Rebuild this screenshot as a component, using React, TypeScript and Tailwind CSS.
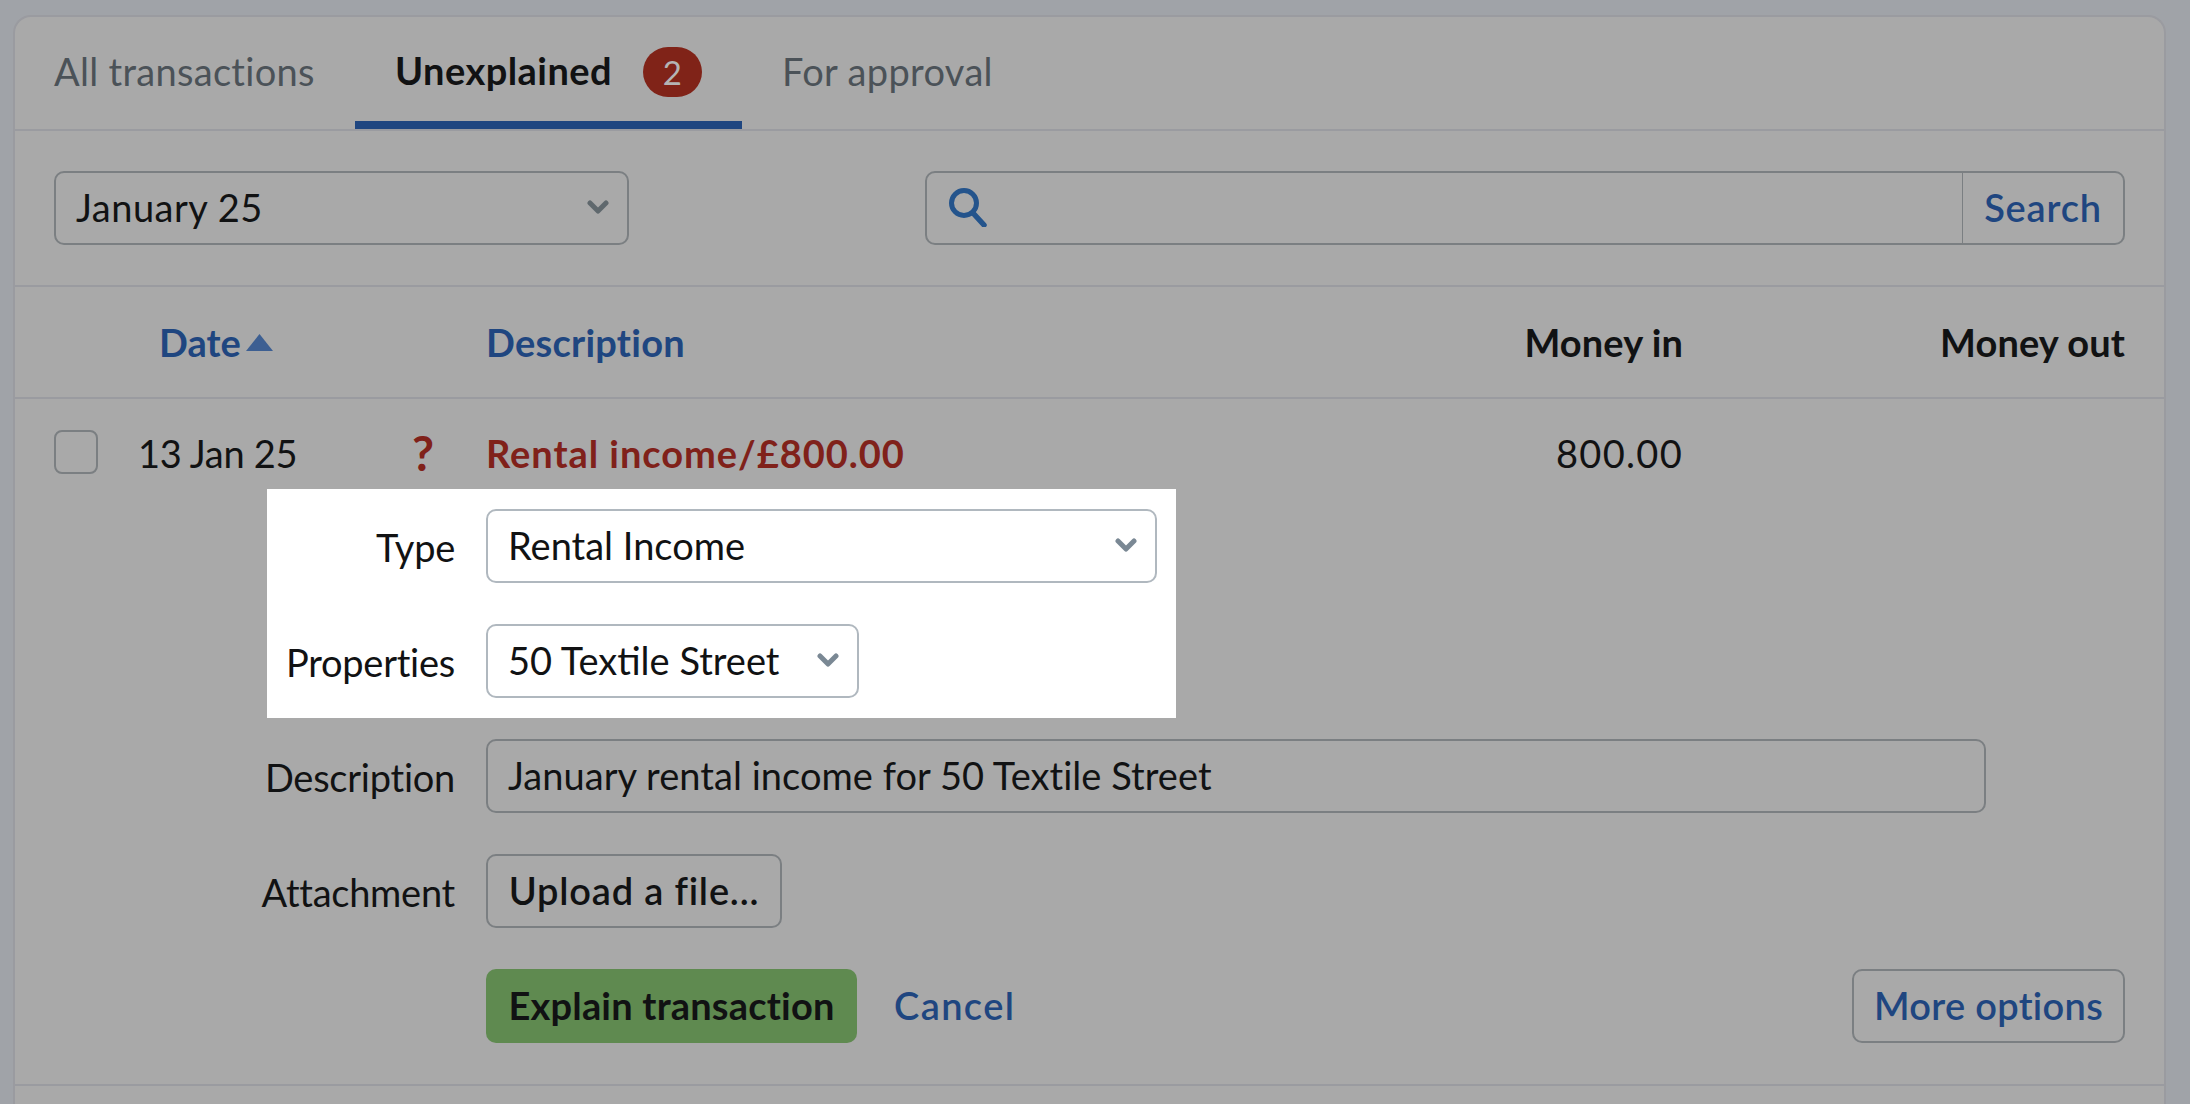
import React from "react";

const Chevron = ({ color = "#5f686d" }: { color?: string }) => (
  <svg width="22" height="14" viewBox="0 0 22 14" fill="none" className="shrink-0">
    <path d="M3 3l8 8 8-8" stroke={color} strokeWidth="5" strokeLinecap="round" strokeLinejoin="round" />
  </svg>
);

const Row = ({ label, children }: { label: string; children: React.ReactNode }) => (
  <div className="flex items-center gap-[31px]">
    <div className="w-[188px] flex justify-end whitespace-nowrap pt-[1px] tracking-[-0.25px] text-[#111213]">{label}</div>
    {children}
  </div>
);

export default function App() {
  return (
    <div className="w-[2190px] h-[1104px] overflow-hidden bg-[#a0a3a8] pl-[13px] pt-[15px] text-[38px] leading-[50px] text-[#111213] font-['Lato',sans-serif]">
      <div className="w-[2153px] h-[1100px] rounded-t-[18px] border-x-2 border-t-2 border-[#9a9ba0] bg-[#a9a9a9]">
        <div className="flex h-[114px] border-b-2 border-[#9a9ba0]">
          <div className="flex h-[112px] w-[340px] items-center pl-[39px] pb-[5px] tracking-[0.3px] text-[#4b5258]">All transactions</div>
          <div className="flex h-[112px] w-[387px] items-center gap-[31px] border-b-[8px] border-[#1f4680] pl-[40px] pt-[2px] font-bold tracking-[0.45px]">
            <span>Unexplained</span>
            <span className="mt-[3px] flex h-[50px] w-[59px] items-center justify-center rounded-full bg-[#802318] text-[33px] font-normal text-[#b4b4b4]">2</span>
          </div>
          <div className="flex h-[112px] items-center pl-[40px] pb-[5px] tracking-[0.35px] text-[#4b5258]">For approval</div>
        </div>

        <div className="flex h-[156px] items-center justify-between border-b-2 border-[#9a9ba0] pl-[39px] pr-[39px]">
          <div className="flex h-[74px] w-[575px] items-center justify-between rounded-[10px] border-2 border-[#7b7f82] pb-[2px] pl-[20px] pr-[18px]">
            <span className="tracking-[0.5px]">January 25</span>
            <Chevron />
          </div>
          <div className="flex h-[74px] w-[1200px] items-center rounded-[10px] border-2 border-[#7b7f82]">
            <div className="flex-1 pl-[21px] pb-[3px]">
              <svg width="40" height="40" viewBox="0 0 40 40" fill="none" className="block">
                <circle cx="16" cy="16" r="12.5" stroke="#24548c" strokeWidth="5" />
                <path d="M25 26l11 12" stroke="#24548c" strokeWidth="5.5" strokeLinecap="round" />
              </svg>
            </div>
            <div className="flex h-full w-[161px] items-center justify-center border-l border-[#7b7f82] pb-[2px] font-semibold tracking-[0.8px] text-[#1f4680]">Search</div>
          </div>
        </div>

        <div className="flex h-[112px] items-center border-b-2 border-[#9a9ba0] pr-[39px] font-bold">
          <div className="flex w-[471px] items-center gap-[5px] pl-[144px] text-[#1f4680]">
            <span>Date</span>
            <svg width="27" height="17" viewBox="0 0 27 17"><path d="M13.5 0L27 17H0z" fill="#3d5f92" /></svg>
          </div>
          <div className="flex-1 text-[#1f4680] tracking-[0.25px]">Description</div>
          <div className="w-[200px] text-right tracking-[0.1px]">Money in</div>
          <div className="w-[442px] text-right tracking-[0.1px]">Money out</div>
        </div>

        <div className="border-b-2 border-[#9a9ba0] pr-[40px]">
          <div className="flex h-[90px] items-center pt-[18px]">
            <div className="ml-[39px] -mt-[2px] h-[44px] w-[44px] shrink-0 rounded-[8px] border-2 border-[#7b7f82]" />
            <div className="ml-[40px] w-[274px] tracking-[-0.3px]">13 Jan 25</div>
            <div className="w-[74px] text-[48px] font-bold text-[#80211a]">?</div>
            <div className="flex-1 font-bold tracking-[0.95px] text-[#80211a]">Rental income/£800.00</div>
            <div className="w-[201px] text-right tracking-[1.3px]">800.00</div>
            <div className="w-[441px]" />
          </div>
          <div className="ml-[252px] w-[909px] bg-white py-[20px]">
            <div className="flex flex-col gap-[41px]">
              <Row label="Type">
                <div className="flex h-[74px] w-[671px] items-center justify-between rounded-[10px] border-2 border-[#b0b8bf] pb-[2px] pl-[20px] pr-[18px]">
                  <span>Rental Income</span>
                  <Chevron color="#7a8894" />
                </div>
              </Row>
              <Row label="Properties">
                <div className="flex h-[74px] w-[373px] items-center justify-between rounded-[10px] border-2 border-[#b0b8bf] pb-[2px] pl-[20px] pr-[18px]">
                  <span>50 Textile Street</span>
                  <Chevron color="#7a8894" />
                </div>
              </Row>
            </div>
          </div>
          <div className="ml-[252px] flex flex-col gap-[41px] pt-[21px] pb-[41px]">
            <Row label="Description">
              <div className="flex h-[74px] w-[1500px] items-center rounded-[10px] border-2 border-[#7b7f82] pb-[2px] px-[20px] tracking-[0.05px]">January rental income for 50 Textile Street</div>
            </Row>
            <Row label="Attachment">
              <div className="flex h-[74px] w-[296px] items-center justify-center rounded-[10px] border-2 border-[#7b7f82] pb-[2px] font-semibold tracking-[0.8px]">Upload a file...</div>
            </Row>
            <div className="flex items-center pl-[219px]">
              <div className="flex h-[74px] w-[371px] items-center justify-center rounded-[10px] bg-[#5f8a50] pb-[2px] font-bold tracking-[0.2px]">Explain transaction</div>
              <div className="ml-[37px] pb-[2px] font-semibold tracking-[1.4px] text-[#1f4680]">Cancel</div>
              <div className="ml-auto -mr-[1px] flex h-[74px] w-[273px] items-center justify-center rounded-[10px] border-2 border-[#7b7f82] pb-[2px] font-semibold tracking-[0.3px] text-[#1f4680]">More options</div>
            </div>
          </div>
        </div>
      </div>
    </div>
  );
}
